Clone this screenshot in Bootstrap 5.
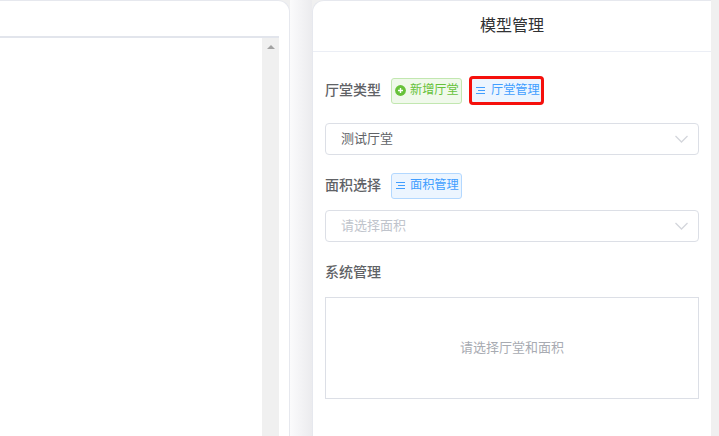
<!DOCTYPE html>
<html lang="zh">
<head>
<meta charset="utf-8">
<link href="https://cdn.jsdelivr.net/npm/bootstrap@5.3.0/dist/css/bootstrap.min.css" rel="stylesheet">
<style>
html,body{height:100%;overflow:hidden}
body{background:#fff;font-family:"Liberation Sans","Noto Sans CJK SC",sans-serif;font-size:13px;color:#606266}
.stage{height:436px;background:#f0f0f0;padding-right:8px}
.gapper{width:22px;flex:none;background:linear-gradient(90deg,#fbfbfc,#ebebee)}
.leftp{width:290px;flex:none;background:#fff;border:1px solid #e6e8ee;border-left:0;border-bottom:0;border-top-right-radius:12px;padding-top:35px;padding-right:10px}
.viewer{height:100%;border-top:2px solid #e2e5ec;display:flex;justify-content:flex-end}
.scrolltrack{width:17px;background:#f0f0f0;display:flex;justify-content:center;padding-top:7px}
.arrow-up{width:0;height:0;border-left:4px solid transparent;border-right:4px solid transparent;border-bottom:4px solid #a3a3a3}
.rightp{background:#fff;border:1px solid #e6e8ee;border-right:0;border-bottom:0;border-top-left-radius:12px;width:399px;flex:none}
.headp{height:51px;border-bottom:1px solid #ebeef5;font-size:16px;color:#303133;display:flex;align-items:center;justify-content:center}
.bodyp{padding:0 12px}
.lab{font-weight:500;font-size:14px;color:#606266;margin-right:10px;line-height:20px}
.rowa .lab,.rowb .lab{margin-bottom:2px}
.pill{height:26px;width:71px;flex:none;font-size:12.2px;padding:0 0 1px 3px;border-radius:3px;border:1px solid transparent;display:inline-flex;align-items:center;gap:4px;line-height:1}
.pill-g{background:#f0f9eb;border-color:#c2e7b0;color:#67c23a}
.pill-b{background:#ecf5ff;border-color:#b3d8ff;color:#409eff}
.pill-r{width:75px;border:3px solid #f5100c;background:#ecf5ff;color:#409eff;height:29px;border-radius:4px;padding:0 0 1px 3px;gap:5px;margin-left:7px}
.rowa{height:29px;margin-top:24px}
.rowb{margin-top:18px;height:26px}
.fakesel{height:32px;border:1px solid #dcdfe6;border-radius:4px;display:flex;align-items:center;justify-content:space-between;padding:0 10px 0 15px;color:#606266}
.fakesel.ph{color:#c0c4cc}
.sel1{margin-top:18px}
.sel2{margin-top:11px}
.sysl{margin-top:20px}
.emptybox{height:102px;border:1px solid #dcdfe6;color:#a8abb2;display:flex;align-items:center;justify-content:center;margin-top:15px}
.w-ic{flex:none;display:block}
</style>
</head>
<body>
<div class="stage d-flex">
  <div class="leftp">
    <div class="viewer"><div class="scrolltrack"><div class="arrow-up"></div></div></div>
  </div>
  <div class="gapper"></div>
  <div class="rightp">
    <div class="headp">模型管理</div>
    <div class="bodyp">
      <div class="rowa d-flex align-items-center">
        <span class="lab">厅堂类型</span>
        <span class="pill pill-g"><svg class="w-ic" width="11" height="11" viewBox="0 0 11 11"><circle cx="5.500" cy="5.500" r="5.400" fill="#67c23a"/><path d="M3 5.500h5M5.500 3v5" stroke="#fff" stroke-width="1.400"/></svg>新增厅堂</span>
        <span class="pill pill-r"><svg class="w-ic" width="11" height="11" viewBox="0 0 11 11"><path d="M1 2.500h9M3 5.500h7M1 8.500h9" stroke="#409eff" stroke-width="1.200"/></svg>厅堂管理</span>
      </div>
      <div class="fakesel sel1"><span>测试厅堂</span><svg class="w-ic" width="13" height="8" viewBox="0 0 13 8"><path d="M.500 1l6 6 6-6" fill="none" stroke="#d4d6dc" stroke-width="1.300"/></svg></div>
      <div class="rowb d-flex align-items-center">
        <span class="lab">面积选择</span>
        <span class="pill pill-b"><svg class="w-ic" width="11" height="11" viewBox="0 0 11 11"><path d="M1 2.500h9M3 5.500h7M1 8.500h9" stroke="#409eff" stroke-width="1.200"/></svg>面积管理</span>
      </div>
      <div class="fakesel ph sel2"><span>请选择面积</span><svg class="w-ic" width="13" height="8" viewBox="0 0 13 8"><path d="M.500 1l6 6 6-6" fill="none" stroke="#d4d6dc" stroke-width="1.300"/></svg></div>
      <div class="lab sysl">系统管理</div>
      <div class="emptybox">请选择厅堂和面积</div>
    </div>
  </div>
</div>
</body>
</html>
